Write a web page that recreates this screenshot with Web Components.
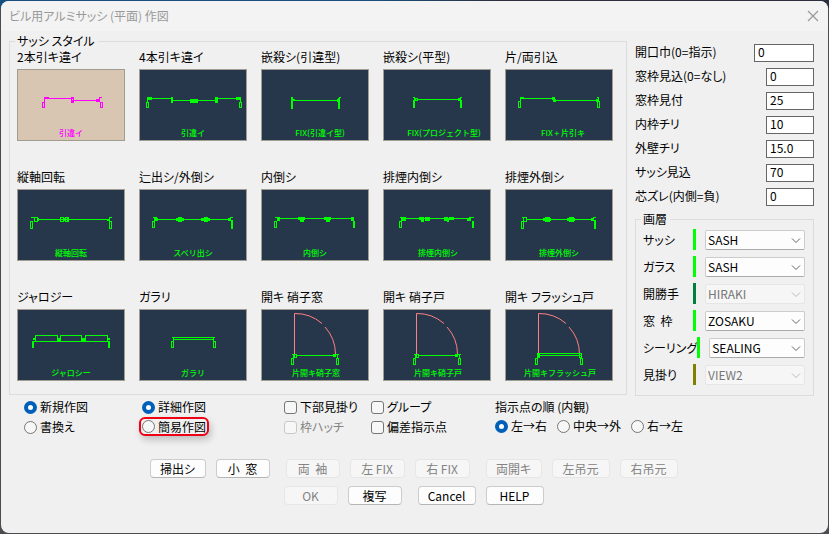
<!DOCTYPE html>
<html lang="ja">
<head>
<meta charset="utf-8">
<title>ビル用アルミサッシ (平面) 作図</title>
<style>
html { height: 100%; }
body {
  margin: 0; min-height: 100%; box-sizing: border-box; padding: 1px; display: flex;
  background: linear-gradient(90deg, #174f7f 0, #174f7f 45%, #2d2f3e 60%, #2d2f3e 100%) top / 100% 8px no-repeat, #4b4c50;
  font: 12px/16px "Noto Sans CJK JP", sans-serif;
  font-feature-settings: "palt";
  color: #000;
}
</style>
</head>
<body>
<sash-dialog heading="ビル用アルミサッシ (平面) 作図">
  <style-group slot="styles"></style-group>
  <size-fields slot="side"></size-fields>
  <layer-group slot="side"></layer-group>
  <option-bar slot="options"></option-bar>
  <action-row slot="actions" items="掃出シ:56|小  窓:54:16|*両  袖:54|*左 FIX:55|*右 FIX:55:16|*両開キ:56|*左吊元:58|*右吊元:58"></action-row>
  <action-row slot="actions" items="*OK:54|複写:54:16|Cancel:58|HELP:58"></action-row>
</sash-dialog>

<script>
const define = (tag, render) => customElements.define(tag, class extends HTMLElement {
  connectedCallback() {
    if (this.shadowRoot) return;
    this.attachShadow({ mode: 'open' }).innerHTML = render(this);
  }
});

const groupCss = `
  fieldset { margin: 0; min-width: 0; border: 1px solid #dcdcdc; }
  legend { padding: 0 3px 2px 2px; margin-left: -2px; height: 11px; line-height: 11px; }`;

define('sash-dialog', el => `
<style>
  :host { display: flex; flex-direction: column; flex: 1; min-width: 0; background: #f0f0f0; border-radius: 8px; overflow: hidden; }
  header { display: flex; align-items: center; justify-content: space-between; height: 30px; padding: 0 9px 0 8px; background: #f3f3f3; color: #999; }
  h1 { font: inherit; margin: 0; }
  header button { display: flex; border: 0; padding: 0; background: none; }
  main { display: flex; gap: 8px; padding: 4px 14px 0 8px; }
  .styles { flex: 1; min-width: 0; }
  .side { width: 179px; }
  .options { padding: 3px 13px 0 23px; }
  footer { display: flex; flex-direction: column; gap: 8px; padding: 24px 2px 0 0; }
</style>
<header><h1>${el.getAttribute('heading')}</h1>
  <button aria-label="閉じる"><svg width="12" height="12" viewBox="0 0 12 12" fill="none" stroke="#999" stroke-width="1.2"><path d="M1 1l10 10M11 1L1 11"/></svg></button>
</header>
<main><div class="styles"><slot name="styles"></slot></div><div class="side"><slot name="side"></slot></div></main>
<div class="options"><slot name="options"></slot></div>
<footer><slot name="actions"></slot></footer>`);

/* Each plan is a list of "x,y,w,h" bars; a leading "o" draws the bar hollow. */
const swing = '31,45,5,1;o33,45,3,4;32,45,1,4;35,46,40,1;o72,45,3,3;75,45,3,1;76,45,1,4;o30,49,3,7;o75,49,3,7';
const STYLES = [
  ['2本引キ違イ', '引違イ', 54, 'o25,33,3,6;27,28,1,5;27,28,5,2;27,29,30,1;o54,28,3,4;54,31,3,3;54,31,28,1;79,30,4,3;82,28,1,5;83,28,2,1;o83,33,3,6'],
  ['4本引キ違イ', '引違イ', 54, 'o7,33,3,6;8,28,1,5;8,28,5,3;9,29,24,1;32,28,2,6;33,31,43,1;o51,30,4,4;51,31,3,2;o55,30,4,4;56,31,3,2;76,28,3,6;78,29,22,1;97,28,4,3;101,28,1,5;o100,33,3,6'],
  ['嵌殺シ(引違型)', 'FIX(引違イ型)', 59, '30,28,2,12;31,30,3,2;32,31,46,1;76,30,2,3;77,29,2,11;78,28,2,1'],
  ['嵌殺シ(平型)', 'FIX(プロジェクト型)', 61, '30,31,2,8;31,28,1,4;30,28,2,1;o32,29,3,3;34,30,43,1;75,29,3,3;77,31,2,8;77,28,2,1'],
  ['片/両引込', 'FIX + 片引キ', 58, 'o13,32,3,7;15,28,1,4;15,28,4,2;16,29,33,1;47,28,3,3;48,30,3,3;50,31,43,1;91,30,2,3;92,28,2,1;93,28,1,5;o92,32,3,7'],
  ['縦軸回転', '縦軸回転', 54, 'o13,32,3,8;14,28,4,1;o17,28,4,5;21,29,1,3;21,30,70,1;o43,28,4,5;46,29,3,1;46,31,3,1;o48,28,4,5;50,29,1,3;90,30,3,2;92,28,3,1;92,29,1,4;o92,32,3,8'],
  ['辷出シ/外倒シ', 'スベリ出シ', 54, 'o13,32,3,7;14,28,4,1;15,29,4,3;18,30,74,1;37,29,8,3;39,28,4,5;62,29,9,3;o65,28,4,5;89,29,3,3;91,28,3,1;92,31,2,9'],
  ['内倒シ', '内倒シ', 54, 'o13,32,3,7;14,28,4,1;16,28,3,4;18,29,74,1;37,28,7,3;39,28,4,5;63,28,7,3;65,30,4,3;90,28,3,4;92,32,2,7'],
  ['排煙内倒シ', '排煙内倒シ', 55, 'o16,32,3,7;17,28,3,1;18,28,5,4;22,29,65,1;36,28,5,3;38,29,3,4;42,28,5,4;61,28,4,4;64,30,2,3;66,28,5,3;84,29,4,3;86,28,5,1;89,32,2,7'],
  ['排煙外倒シ', '排煙外倒シ', 54, 'o16,32,3,8;17,28,4,1;o18,28,4,5;22,30,65,1;38,29,8,3;o40,28,3,5;o42,28,3,5;62,29,8,3;o64,28,3,5;o66,28,3,5;86,29,3,3;88,28,3,1;89,31,2,9'],
  ['ジャロジー', 'ジャロシー', 54, '15,32,2,7;16,29,2,2;o18,26,23,7;o43,26,22,7;o68,26,23,7;40,29,3,4;65,29,3,4;91,29,2,2;91,32,2,7;16,32,76,1'],
  ['ガラリ', 'ガラリ', 54, '33,28,43,1;34,30,41,1;34,28,1,4;74,28,1,5;o32,32,3,7;o74,32,3,7'],
  ['開キ 硝子窓', '片開キ硝子窓', 55, swing, 1],
  ['開キ 硝子戸', '片開キ硝子戸', 55, swing, 1],
  ['開キ フラッシュ戸', '片開キフラッシュ戸', 55, '32,44,45,1;33,46,43,1;o33,44,2,5;32,45,1,4;o74,44,3,5;o30,49,3,7;o75,49,3,7', 1],
];
const bars = plan => plan.split(';').map(b => {
  const hollow = b[0] === 'o';
  const [x, y, w, h] = b.replace('o', '').split(',').map(Number);
  return `M${x} ${y}h${w}v${h}h${-w}z` + (hollow ? `M${x + 1} ${y + 1}v${h - 2}h${w - 2}v${2 - h}z` : '');
});
const arc = `<path d="M33.5 45V4.5A41 41 0 0 1 61 14.5M64 18A41 41 0 0 1 74.5 45" fill="none" stroke="#ff8080"/>`;

define('sash-tile', el => {
  const i = +el.getAttribute('index'), [name, caption, cx, plan, door] = STYLES[i];
  return `
<style>
  :host { display: flex; flex-direction: column; gap: 4px; min-width: 0; }
  label { white-space: nowrap; height: 16px; }
  button { display: block; padding: 0; height: 72px; border: 1px solid #a09c90; background: #26374c; color: #0f0; }
  button[aria-pressed=true] { background: #d8c6b3; color: #f0f; }
  svg { display: block; width: 100%; height: 70px; }
  text { font: 500 8px "Noto Sans CJK JP", sans-serif; font-feature-settings: normal; }
</style>
<label for="b">${name}</label>
<button id="b" aria-pressed="${i === 0}"><svg viewBox="1 1 106 70" fill="currentColor">
${door ? arc : ''}${bars(plan).map(d => `<path shape-rendering="crispEdges" d="${d}"/>`).join('')}
<text x="${cx}" y="67" text-anchor="middle">${caption}</text></svg></button>`;
});

define('style-group', () => `
<style>
  :host { display: block; }
  ${groupCss}
  fieldset { padding: 1px 13px 13px 7px; }
  .grid { display: grid; grid-template-columns: repeat(5, minmax(0, 1fr)); gap: 28px 14px; }
</style>
<fieldset><legend>サッシ スタイル</legend><div class="grid">
${STYLES.map((s, i) => `<sash-tile index="${i}"></sash-tile>`).join('')}
</div></fieldset>`);

define('size-fields', () => `
<style>
  :host { display: flex; flex-direction: column; gap: 6px; padding: 9px 0 7px; }
  div { display: flex; justify-content: space-between; align-items: center; }
  label { white-space: nowrap; height: 18px; line-height: 16px; }
  input { box-sizing: border-box; width: 48px; height: 18px; margin: 0; padding: 0 3px 3px; border: 1px solid #666; background: #fff; color: #000; font: inherit; line-height: 13px; }
  input.wide { width: 60px; }
</style>
${[['開口巾(0=指示)', '0'], ['窓枠見込(0=なし)', '0'], ['窓枠見付', '25'], ['内枠チリ', '10'], ['外壁チリ', '15.0'], ['サッシ見込', '70'], ['芯ズレ(内側=負)', '0']]
  .map(([l, v], i) => `<div><label for="f${i}">${l}</label><input id="f${i}" value="${v}"${i ? '' : ' class="wide"'}></div>`).join('')}`);

define('layer-group', () => `
<style>
  :host { display: block; }
  ${groupCss}
  fieldset { padding: 3px 8px 10px 7px; }
  .rows { display: flex; flex-direction: column; gap: 6px; }
  .row { display: flex; align-items: center; }
  label { flex: 1; white-space: pre; }
  i { width: 3px; height: 21px; margin-right: 9px; }
  .pick { position: relative; width: 100px; height: 20px; }
  select { appearance: none; box-sizing: border-box; width: 100%; height: 20px; margin: 0; padding: 0 2px; border: 1px solid #ccc; border-bottom-color: #aaa; border-radius: 2px; background: #fdfdfd; color: #000; font: inherit; opacity: 1; }
  select:disabled { background: #f6f6f6; border-color: #e6e6e6; color: #777; }
  svg { position: absolute; right: 4px; top: 7px; pointer-events: none; }
</style>
<fieldset><legend>画層</legend><div class="rows">
${[['サッシ', 'SASH', '#0f0'], ['ガラス', 'SASH', '#0f0'], ['開勝手', 'HIRAKI', '#008040', 1], ['窓  枠', 'ZOSAKU', '#0f0'], ['シーリング', 'SEALING', '#0f0'], ['見掛り', 'VIEW2', '#808000', 1]]
  .map(([l, v, c, off], i) => `<div class="row"><label for="s${i}">${l}</label><i style="background:${c}"></i>
  <span class="pick"><select id="s${i}"${off ? ' disabled' : ''}><option>${v}</option></select>
  <svg width="10" height="7" viewBox="0 0 10 7" fill="none" stroke="${off ? '#bbb' : '#666'}"><path d="M1 1.5l4 4 4-4"/></svg></span></div>`).join('')}
</div></fieldset>`);

const optionCss = `
  label { display: flex; align-items: center; gap: 3px; height: 16px; white-space: nowrap; }
  input { appearance: none; box-sizing: border-box; flex: none; width: 13px; height: 13px; margin: 0; border: 1px solid #767676; background: #f7f7f7; }
  input:disabled { border-color: #c8c8c8; }
  input:disabled + span { color: #838383; }
  input[type=radio] { border-radius: 50%; }
  input[type=radio]:checked { border: 4px solid #005fb8; background: #fff; }
  input[type=checkbox] { border-radius: 3px; }`;

define('radio-set', el => `
<style>
  :host { display: flex; flex-direction: column; align-items: flex-start; gap: 4px; }
  :host([row]) { flex-direction: row; gap: 10px; }
  ${optionCss}
  .marked { outline: 2px solid #f00014; outline-offset: 0; border-radius: 4px; padding: 0 1px; margin: 0 -1px; height: 15px; box-shadow: 2px 4px 7px 2px #0003; }
</style>
${el.getAttribute('items').split('|').map((t, i) => `<label${t[0] === '!' ? ' class="marked"' : ''}><input type="radio" name="r"${i ? '' : ' checked'}><span>${t.replace('!', '')}</span></label>`).join('')}`);

define('check-set', el => `
<style>
  :host { display: flex; flex-direction: column; align-items: flex-start; gap: 4px; }
  ${optionCss}
</style>
${el.getAttribute('items').split('|').map(t => `<label><input type="checkbox"${t[0] === '*' ? ' disabled' : ''}><span>${t.replace('*', '')}</span></label>`).join('')}`);

define('option-bar', () => `
<style>
  :host { display: grid; grid-template-columns: 118px 142px 87px 124px 1fr; }
  .order { display: flex; flex-direction: column; gap: 3px; }
</style>
<radio-set items="新規作図|書換え"></radio-set>
<radio-set items="詳細作図|!簡易作図"></radio-set>
<check-set items="下部見掛り|*枠ハッチ"></check-set>
<check-set items="グループ|偏差指示点"></check-set>
<div class="order"><span>指示点の順 (内観)</span><radio-set row items="左→右|中央→外|右→左"></radio-set></div>`);

/* items: "[*]text:width[:gap after]", where * marks a disabled button. */
define('action-row', el => `
<style>
  :host { display: flex; justify-content: center; }
  button { box-sizing: border-box; height: 19px; padding: 0; margin-right: 10px; border: 1px solid #ccc; border-bottom-color: #b5b5b5; border-radius: 4px; background: #fdfdfd; color: #000; font: inherit; font-feature-settings: inherit; line-height: 16px; white-space: pre; }
  button:last-of-type { margin-right: 0; }
  button:disabled { background: #f6f6f6; border-color: #e6e6e6; color: #838383; }
</style>
${el.getAttribute('items').split('|').map(t => {
  const [s, w, g] = t.split(':');
  return `<button${s[0] === '*' ? ' disabled' : ''} style="width:${w}px${g ? `;margin-right:${g}px` : ''}">${s.replace('*', '')}</button>`;
}).join('')}`);
</script>
</body>
</html>
